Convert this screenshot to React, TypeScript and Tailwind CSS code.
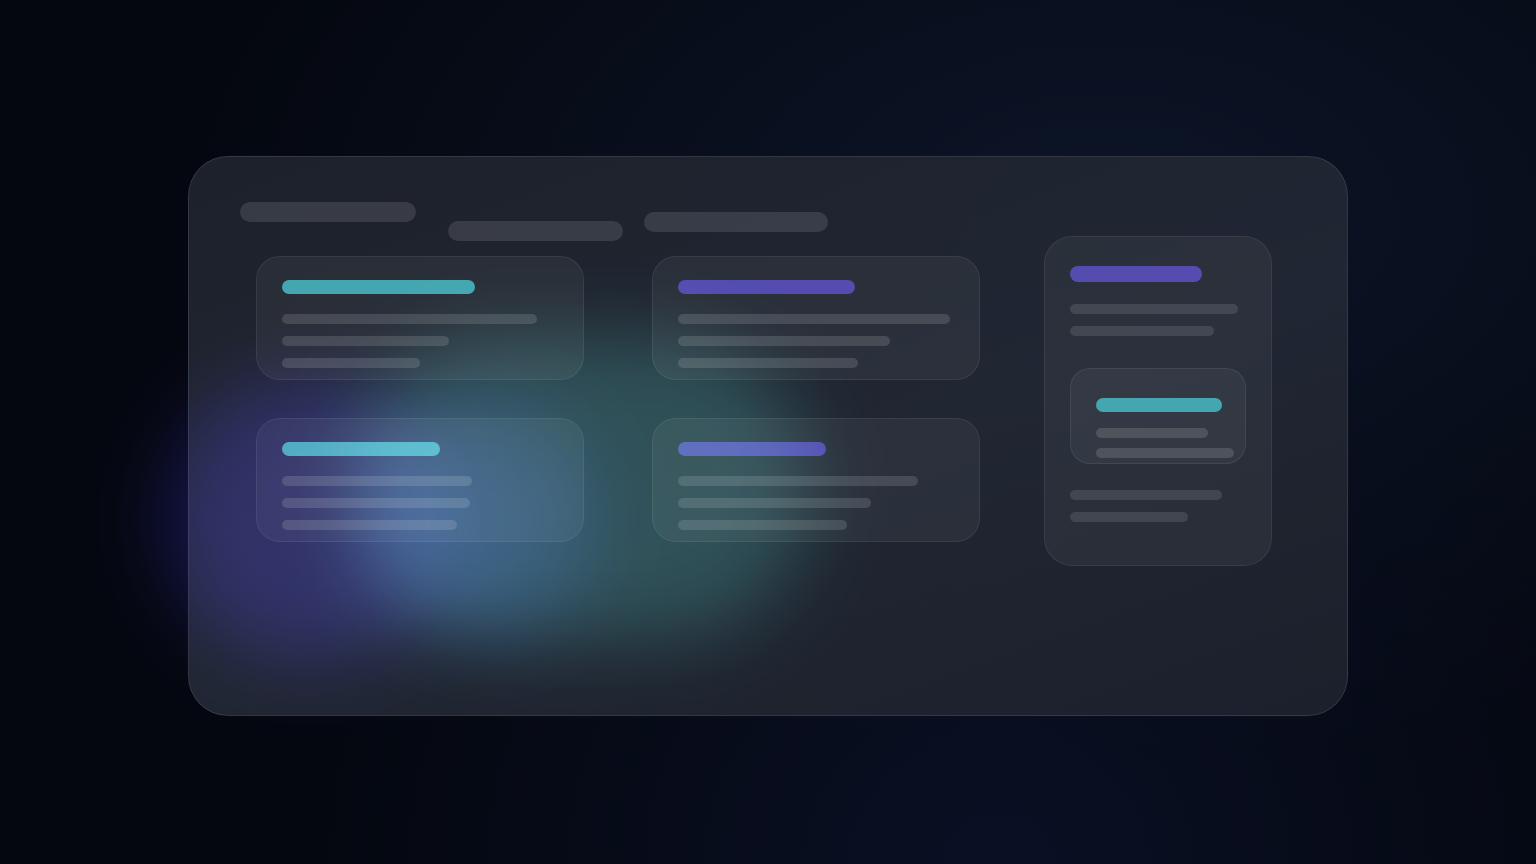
import React from 'react';

type Line = { w: number };

const Bar = ({ w, h = 10, color = 'bg-[#4a4e59]', className = '' }: { w: number; h?: number; color?: string; className?: string }) => (
  <div className={`rounded-full ${color} ${className}`} style={{ width: w, height: h }} />
);

function Card({ accent, accentW, lines }: { accent: 'cyan' | 'purple'; accentW: number; lines: Line[] }) {
  const color = accent === 'cyan' ? 'bg-[#48afb9]' : 'bg-[#5950b8]';
  return (
    <div className="h-[124px] w-[328px] rounded-[24px] border border-white/[0.08] bg-white/[0.05] px-[25px] pt-[23px]">
      <Bar w={accentW} h={14} color={color} />
      <div className="mt-[20px] flex flex-col gap-[12px]">
        {lines.map((l, i) => (
          <Bar key={i} w={l.w} color="bg-white/[0.14]" />
        ))}
      </div>
    </div>
  );
}

export default function App() {
  return (
    <div className="relative flex h-[864px] w-full justify-center overflow-hidden bg-[#04070f] pt-[156px]">
      {/* background tint */}
      <div className="absolute inset-0 bg-[radial-gradient(ellipse_at_72%_25%,#0c1528_0%,transparent_60%)]" />
      <div className="absolute inset-0 bg-[radial-gradient(ellipse_at_65%_100%,#0a1024_0%,transparent_50%)]" />

      <div className="relative flex h-[560px] w-[1160px] rounded-[40px] border border-white/[0.1] bg-[linear-gradient(160deg,#1f232d_0%,#222834_55%,#1e222d_100%)] opacity-95">
        <div className="flex flex-col pl-[51px] pt-[45px]">
          <div className="flex items-start">
            <Bar w={176} h={20} color="bg-white/[0.12]" />
            <Bar w={175} h={20} color="bg-white/[0.12]" className="ml-[32px] mt-[19px]" />
            <Bar w={184} h={20} color="bg-white/[0.12]" className="ml-[21px] mt-[10px]" />
          </div>
          <div className="ml-[16px] mt-[15px] grid grid-cols-[328px_328px] gap-x-[68px] gap-y-[38px]">
            <Card accent="cyan" accentW={193} lines={[{ w: 255 }, { w: 167 }, { w: 138 }]} />
            <Card accent="purple" accentW={177} lines={[{ w: 272 }, { w: 212 }, { w: 180 }]} />
            <Card accent="cyan" accentW={158} lines={[{ w: 190 }, { w: 188 }, { w: 175 }]} />
            <Card accent="purple" accentW={148} lines={[{ w: 240 }, { w: 193 }, { w: 169 }]} />
          </div>
        </div>

        <div className="ml-[64px] mt-[79px] h-[330px] w-[228px] rounded-[28px] border border-white/[0.08] bg-white/[0.05] px-[25px] pt-[29px]">
          <Bar w={132} h={16} color="bg-[#5950b8]" />
          <div className="mt-[22px] flex flex-col gap-[12px]">
            <Bar w={168} color="bg-white/[0.12]" />
            <Bar w={144} color="bg-white/[0.12]" />
          </div>
          <div className="mt-[32px] h-[96px] w-[176px] rounded-[20px] border border-white/[0.08] bg-white/[0.05] pl-[25px] pt-[29px]">
            <Bar w={126} h={14} color="bg-[#48afb9]" />
            <div className="mt-[16px] flex flex-col gap-[10px]">
              <Bar w={112} color="bg-white/[0.14]" />
              <Bar w={138} color="bg-white/[0.14]" />
            </div>
          </div>
          <div className="mt-[26px] flex flex-col gap-[12px]">
            <Bar w={152} color="bg-white/[0.12]" />
            <Bar w={118} color="bg-white/[0.12]" />
          </div>
        </div>
      </div>

      {/* glows lying over the panel */}
      <div className="pointer-events-none absolute inset-0">
        <div className="absolute left-[165px] top-[378px] h-[282px] w-[290px] rounded-full bg-[#140f44] mix-blend-screen blur-[38px]" />
        <div className="absolute left-[345px] top-[335px] h-[305px] w-[465px] rounded-full bg-[#12322f] mix-blend-screen blur-[38px]" />
        <div className="absolute left-[375px] top-[405px] h-[225px] w-[215px] rounded-full bg-[#0e1a40] mix-blend-screen blur-[40px]" />
      </div>
    </div>
  );
}
